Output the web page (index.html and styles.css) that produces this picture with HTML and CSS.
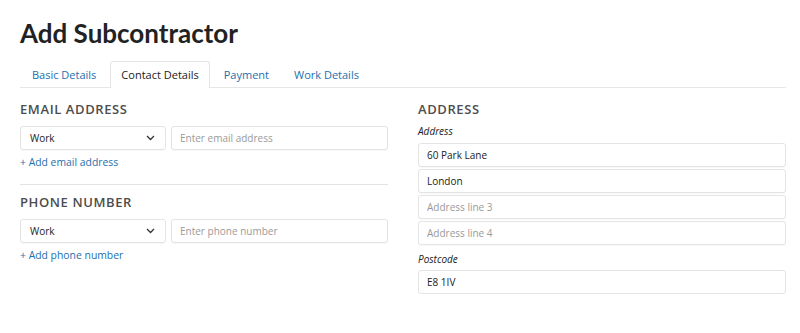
FILE: index.html
```html
<!DOCTYPE html>
<html lang="en">
<head>
    <meta charset="UTF-8">
    <meta name="viewport" content="width=device-width, initial-scale=1.0">
    <title>Add Subcontractor</title>
    <link rel="stylesheet" href="styles.css">
</head>
<body>
    <div class="page">
        <h1 class="page-title">Add Subcontractor</h1>

        <ul class="tabs">
            <li class="tab"><a href="#">Basic Details</a></li>
            <li class="tab active"><a href="#">Contact Details</a></li>
            <li class="tab"><a href="#">Payment</a></li>
            <li class="tab"><a href="#">Work Details</a></li>
        </ul>

        <div class="columns">
            <div class="column">
                <h3 class="section-title">Email Address</h3>
                <div class="field-row">
                    <div class="select">
                        <span>Work</span>
                        <svg class="chevron" width="9" height="6" viewBox="0 0 9 6"><path d="M1 1l3.5 3.5L8 1" fill="none" stroke="#333" stroke-width="1.3"/></svg>
                    </div>
                    <input class="input" type="email" placeholder="Enter email address">
                </div>
                <a class="add-link" href="#">+ Add email address</a>

                <hr class="divider">

                <h3 class="section-title">Phone Number</h3>
                <div class="field-row">
                    <div class="select">
                        <span>Work</span>
                        <svg class="chevron" width="9" height="6" viewBox="0 0 9 6"><path d="M1 1l3.5 3.5L8 1" fill="none" stroke="#333" stroke-width="1.3"/></svg>
                    </div>
                    <input class="input" type="tel" placeholder="Enter phone number">
                </div>
                <a class="add-link" href="#">+ Add phone number</a>
            </div>

            <div class="column">
                <h3 class="section-title">Address</h3>
                <label class="field-label">Address</label>
                <div class="stack">
                    <input class="input" type="text" value="60 Park Lane">
                    <input class="input" type="text" value="London">
                    <input class="input" type="text" placeholder="Address line 3">
                    <input class="input" type="text" placeholder="Address line 4">
                </div>
                <label class="field-label">Postcode</label>
                <input class="input" type="text" value="E8 1IV">
            </div>
        </div>
    </div>
</body>
</html>
```

FILE: styles.css
```css
/* Page */
body {
    margin: 0;
    background: #fff;
    font-family: "Open Sans", "Liberation Sans", sans-serif;
    color: #333;
}

.page {
    width: 766px;
    padding: 17px 20px 0;
}

.page-title {
    margin: 0;
    font-family: Lato, "Open Sans", sans-serif;
    font-size: 26px;
    line-height: 32px;
    font-weight: 700;
    color: #222;
}

/* Tabs */
.tabs {
    display: flex;
    list-style: none;
    margin: 12px 0 0;
    padding: 0 0 0 1px;
    border-bottom: 1px solid #e6e6e6;
}

.tab {
    margin-right: 3px;
    margin-bottom: -1px;
}

.tab a {
    display: block;
    padding: 0 10px;
    height: 25px;
    line-height: 25px;
    font-size: 11px;
    color: #1e6fae;
    text-decoration: none;
    border: 1px solid transparent;
    border-bottom: none;
    border-radius: 3px 3px 0 0;
}

.tab.active a {
    color: #222;
    background: #fff;
    border-color: #e6e6e6;
    height: 26px;
}

/* Columns */
.columns {
    display: grid;
    grid-template-columns: 368px 368px;
    column-gap: 30px;
}

.column {
    display: flex;
    flex-direction: column;
    align-items: flex-start;
}

.section-title {
    margin: 12px 0 8px;
    font-size: 13px;
    line-height: 18px;
    font-weight: 600;
    text-transform: uppercase;
    letter-spacing: 0.6px;
    color: #4d4d4d;
}

/* Fields */
.field-row {
    display: flex;
    gap: 5px;
    width: 100%;
}

.select {
    display: flex;
    align-items: center;
    justify-content: space-between;
    flex: none;
    box-sizing: border-box;
    width: 146px;
    height: 24px;
    padding: 0 10px 0 9px;
    border: 1px solid #e4e4e4;
    border-radius: 3px;
    font-size: 10px;
    color: #222;
    box-shadow: 0 1px 1px rgba(0, 0, 0, 0.03);
}

.input {
    flex: none;
    box-sizing: border-box;
    width: 100%;
    height: 24px;
    margin: 0;
    padding: 0 8px;
    border: 1px solid #e4e4e4;
    border-radius: 3px;
    font-family: inherit;
    font-size: 10px;
    color: #222;
    box-shadow: 0 1px 1px rgba(0, 0, 0, 0.03);
    outline: none;
}

.field-row .input {
    flex: 1;
    width: auto;
}

.input::placeholder {
    color: #9a9a9a;
}

.add-link {
    margin-top: 4px;
    font-size: 10.4px;
    line-height: 16px;
    color: #1e6fae;
    text-decoration: none;
}

.divider {
    width: 100%;
    margin: 14px 0 0;
    border: none;
    border-top: 1px solid #e2e2e2;
}

.divider + .section-title {
    margin-top: 8px;
}

.field-label {
    margin: 7px 0 4px;
    font-size: 10px;
    line-height: 15px;
    font-style: italic;
    color: #222;
}

.section-title + .field-label {
    margin-top: -2px;
}

.stack {
    display: flex;
    flex-direction: column;
    gap: 2px;
    width: 100%;
}

.stack + .field-label {
    margin-top: 7px;
    margin-bottom: 3px;
}
```
